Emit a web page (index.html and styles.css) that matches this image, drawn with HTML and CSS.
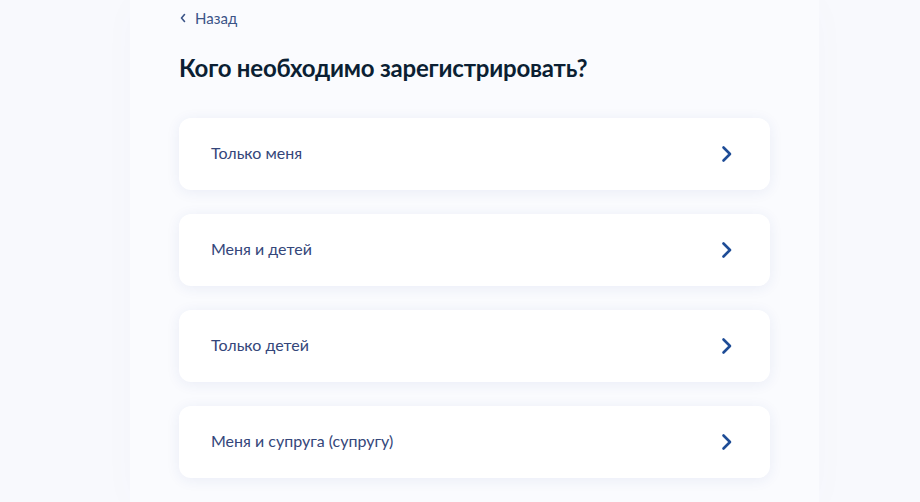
FILE: index.html
```html
<!DOCTYPE html>
<html lang="ru">
<head>
    <meta charset="UTF-8">
    <meta name="viewport" content="width=device-width, initial-scale=1.0">
    <title>Кого необходимо зарегистрировать?</title>
    <link rel="stylesheet" href="styles.css">
</head>
<body>
    <div class="page">
        <a class="back" href="#">
            <svg class="back-icon" width="8" height="10" viewBox="0 0 8 10"><path d="M5.5 1.5 L2.5 5 L5.5 8.5" fill="none" stroke="currentColor" stroke-width="1.6" stroke-linecap="round" stroke-linejoin="round"/></svg>
            <span>Назад</span>
        </a>

        <h1>Кого необходимо зарегистрировать?</h1>

        <!-- Options -->
        <div class="options">
            <a class="option" href="#">
                <span class="option-label">Только меня</span>
                <svg class="chevron" width="14" height="18" viewBox="0 0 14 18"><path d="M3.5 2.5 L10 9 L3.5 15.5" fill="none" stroke="currentColor" stroke-width="2.6" stroke-linecap="round" stroke-linejoin="round"/></svg>
            </a>
            <a class="option" href="#">
                <span class="option-label">Меня и детей</span>
                <svg class="chevron" width="14" height="18" viewBox="0 0 14 18"><path d="M3.5 2.5 L10 9 L3.5 15.5" fill="none" stroke="currentColor" stroke-width="2.6" stroke-linecap="round" stroke-linejoin="round"/></svg>
            </a>
            <a class="option" href="#">
                <span class="option-label">Только детей</span>
                <svg class="chevron" width="14" height="18" viewBox="0 0 14 18"><path d="M3.5 2.5 L10 9 L3.5 15.5" fill="none" stroke="currentColor" stroke-width="2.6" stroke-linecap="round" stroke-linejoin="round"/></svg>
            </a>
            <a class="option" href="#">
                <span class="option-label">Меня и супруга (супругу)</span>
                <svg class="chevron" width="14" height="18" viewBox="0 0 14 18"><path d="M3.5 2.5 L10 9 L3.5 15.5" fill="none" stroke="currentColor" stroke-width="2.6" stroke-linecap="round" stroke-linejoin="round"/></svg>
            </a>
        </div>
    </div>
</body>
</html>
```

FILE: styles.css
```css
body {
    margin: 0;
    background: #f8f9fd;
    font-family: Lato, "Noto Sans", Arial, sans-serif;
    color: #0b1f33;
}
.page {
    width: 591px;
    min-height: 502px;
    margin-left: 130px;
    padding: 7px 49px 0;
    background: #fafbfe;
    box-shadow: 0 0 40px rgba(30, 60, 140, 0.02);
}
.back {
    display: inline-flex;
    align-items: center;
    gap: 8px;
    color: #3a5487;
    text-decoration: none;
    font-size: 15px;
    line-height: 20px;
}
.back-icon {
    color: #3a5487;
}
h1 {
    margin: 24px 0 0;
    font-size: 24px;
    font-weight: 700;
    line-height: 32px;
    letter-spacing: -0.2px;
}
.options {
    display: flex;
    flex-direction: column;
    gap: 24px;
    margin-top: 34px;
}
.option {
    display: flex;
    align-items: center;
    justify-content: space-between;
    height: 72px;
    padding: 0 36px 0 32px;
    background: #fff;
    border-radius: 12px;
    box-shadow: 0 2px 14px rgba(40, 70, 150, 0.08);
    color: #34467a;
    text-decoration: none;
    font-size: 16px;
}
.option-label {
    margin-bottom: 3px;
}
.chevron {
    color: #1e4c96;
    margin-bottom: 1px;
}
```
